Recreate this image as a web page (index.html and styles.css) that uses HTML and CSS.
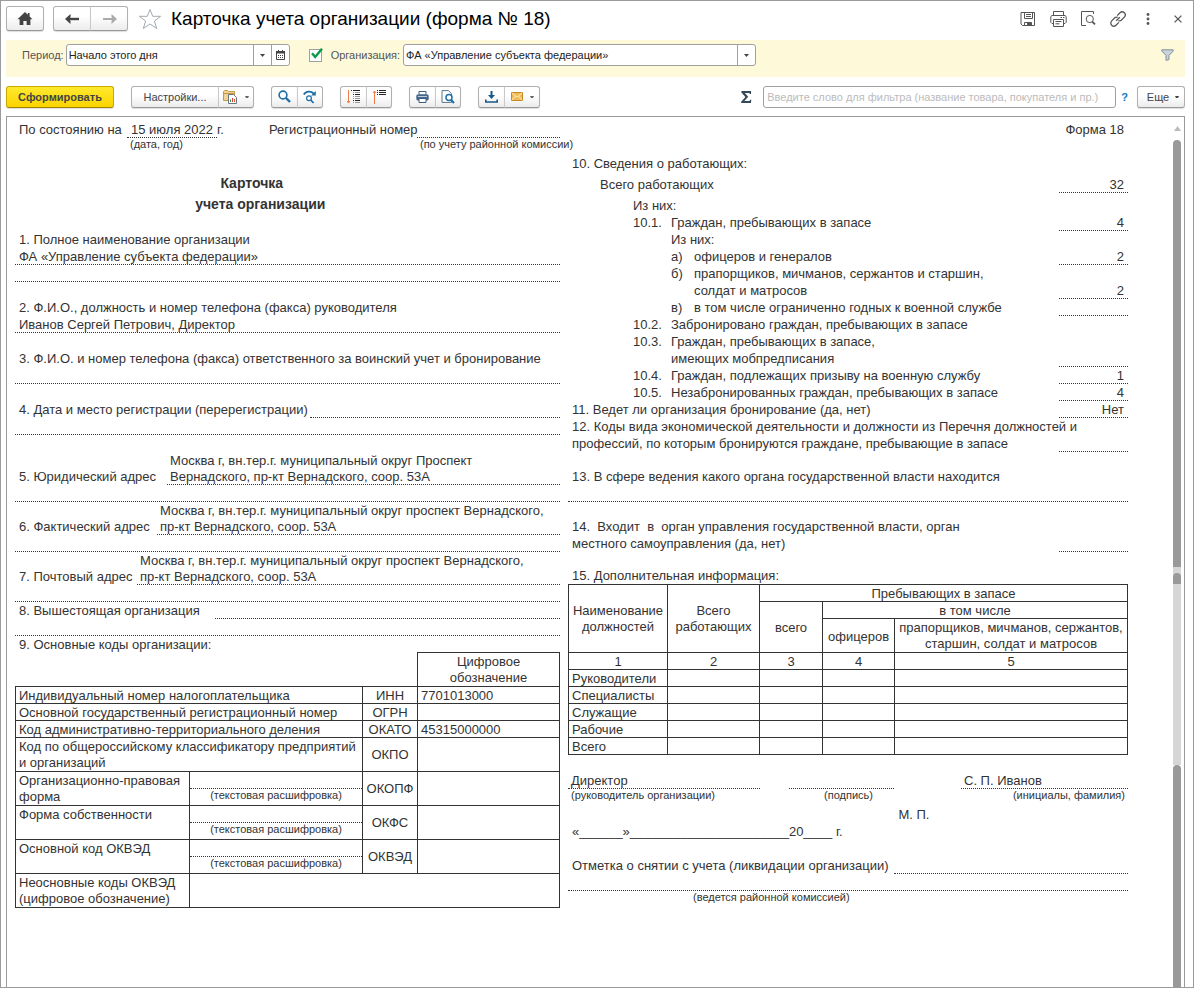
FILE: index.html
```html
<!DOCTYPE html>
<html lang="ru">
<head>
<meta charset="utf-8">
<title>Карточка учета организации (форма № 18)</title>
<link rel="stylesheet" href="styles.css">
</head>
<body>
<div class="window">
  <header class="titlebar">
    <button class="btn nav" aria-label="Домой"><svg width="16" height="14" viewBox="0 0 16 14"><path d="M8 0 0.5 7.2H2.6V13H6.4V9H9.6V13H13.4V7.2H15.5L12.6 4.4V1H10.8V2.7Z" fill="#444"/></svg></button>
    <div class="group">
      <button class="btn nav" aria-label="Назад"><svg width="15" height="12" viewBox="0 0 15 12"><path d="M2 6H14" stroke="#444" stroke-width="2.4"/><path d="M0 6 5.5 1V4L4.5 6 5.5 8V11Z" fill="#444"/></svg></button>
      <button class="btn nav" aria-label="Вперед"><svg width="15" height="12" viewBox="0 0 15 12"><path d="M13 6H1" stroke="#aaa" stroke-width="2"/><path d="M15 6 9.5 1V4L10.5 6 9.5 8V11Z" fill="#aaa"/></svg></button>
    </div>
    <button class="icon star" aria-label="В избранное"><svg width="24" height="22" viewBox="0 0 24 22"><path d="M12 1.5 14.7 8.3H22.6L16.4 13 18.7 20.5 12 16 5.3 20.5 7.6 13 1.4 8.3H9.3Z" fill="#fff" stroke="#a3a9b0"/></svg></button>
    <h1>Карточка учета организации (форма № 18)</h1>
    <div class="winicons">
      <button class="icon" aria-label="Сохранить"><svg width="16" height="16" viewBox="0 0 16 16" fill="none" stroke="#555"><path d="M1 1.5H14.5V14.5H2.5L1 13ZM4.5 1.5V7.5H12.5V1.5M6 3.5H11M6 5.5H11M4.5 14.5V11.5H11.5V14.5"/><path d="M7.5 12H11.5V14.5H7.5Z" fill="#555"/></svg></button>
      <button class="icon" aria-label="Печать"><svg width="17" height="16" viewBox="0 0 17 16" fill="none" stroke="#555"><path d="M3.5 4V.5H13.5V4M3.5 12.5H2L.8 11.3V5.5L2 4.5H15L16.2 5.5V11.3L15 12.5H13.5M3.5 8.5H13.5V15.5H3.5ZM5.5 10.5H11.5M5.5 12.8H9.5M10.5 6.5H12M13 6.5H14.5"/></svg></button>
      <button class="icon" aria-label="Просмотр"><svg width="16" height="16" viewBox="0 0 16 16" fill="none" stroke="#555"><path d="M6 14.5H1.5V.5H13.5V3"/><circle cx="9.8" cy="8" r="3.6"/><path d="M12.2 10.6 15 13.4" stroke-width="1.8"/></svg></button>
      <button class="icon" aria-label="Ссылка"><svg width="16" height="16" viewBox="0 0 16 16" fill="none" stroke="#555" stroke-width="1.3"><path d="M6.2 9.8 9.8 6.2M7.2 4.6 10 1.8A3 3 0 0 1 14.3 6.1L11.2 9.2A2.7 2.7 0 0 1 8.4 9.6M8.8 11.4 6 14.2A3 3 0 0 1 1.7 9.9L4.8 6.8A2.7 2.7 0 0 1 7.6 6.4"/></svg></button>
      <button class="icon" aria-label="Меню"><svg width="4" height="12" viewBox="0 0 4 12" fill="#555"><circle cx="2" cy="1.5" r="1.4"/><circle cx="2" cy="6" r="1.4"/><circle cx="2" cy="10.5" r="1.4"/></svg></button>
      <button class="icon" aria-label="Закрыть"><svg width="8" height="8" viewBox="0 0 8 8" stroke="#555" stroke-width="1.3"><path d="M.6.6 7.4 7.4M7.4.6.6 7.4"/></svg></button>
    </div>
  </header>

  <section class="filters">
    <label for="period">Период:</label>
    <div class="field period">
      <select id="period"><option>Начало этого дня</option></select>
      <span class="drop"><svg width="5" height="3" viewBox="0 0 5 3"><path d="M0 0H5L2.5 3Z" fill="#444"/></svg></span>
      <button class="cal" aria-label="Календарь"><svg width="9" height="10" viewBox="0 0 9 10"><path d="M.5 1.5H8.5V9.5H.5Z" fill="none" stroke="#444"/><path d="M0 1H9V3.4H0ZM2 0H3V1H2ZM6 0H7V1H6Z" fill="#444"/><path d="M2 5.5H7M2 7.5H7" stroke="#444" stroke-dasharray="1 1"/></svg></button>
    </div>
    <label class="check"><input type="checkbox" checked aria-label="Отбор по организации"><svg width="15" height="15" viewBox="0 0 15 15"><path d="M3 6.2 6.2 10 13 1.8" fill="none" stroke="#0a9a4a" stroke-width="2.4"/></svg></label>
    <label for="org">Организация:</label>
    <div class="field org">
      <select id="org"><option>ФА «Управление субъекта федерации»</option></select>
      <span class="drop"><svg width="5" height="3" viewBox="0 0 5 3"><path d="M0 0H5L2.5 3Z" fill="#444"/></svg></span>
    </div>
    <button class="icon funnel" aria-label="Отбор"><svg width="13" height="12" viewBox="0 0 13 12"><path d="M.8.8H12.2V2L8 6.4V10.6L5 11.4V6.4L.8 2Z" fill="#c9d3dc" stroke="#84919c"/></svg></button>
  </section>

  <div class="toolbar">
    <button class="btn primary">Сформировать</button>
    <div class="group">
      <button class="btn settings">Настройки...</button>
      <button class="btn wide" aria-label="Варианты"><svg width="15" height="14" viewBox="0 0 15 14"><path d="M.5 10.5V1.5L1.5.5H4.5L5.5 1.5H11.5V10.5Z" fill="#f3d394" stroke="#c39a49"/><path d="M1 3.5H11" stroke="#c39a49"/><path d="M5.5 4.5H10.5L13.5 7.5V13.5H5.5Z" fill="#fff" stroke="#68767f"/><path d="M7.5 12V9.5" stroke="#2f9b50"/><path d="M9.5 12V8" stroke="#e23c3c"/><path d="M11.5 12V9" stroke="#e25b3c"/></svg><svg width="4" height="2" viewBox="0 0 4 2"><path d="M0 0H4L3 2H1Z" fill="#666"/></svg></button>
    </div>
    <div class="group">
      <button class="btn sq" aria-label="Найти"><svg width="13" height="13" viewBox="0 0 13 13" fill="none" stroke="#1d6ea6"><circle cx="5" cy="5" r="3.9" stroke-width="1.6"/><path d="M8 8 12 12" stroke-width="2.4"/></svg></button>
      <button class="btn sq" aria-label="Искать дальше"><svg width="14" height="14" viewBox="0 0 14 14" fill="none" stroke="#1d6ea6"><path d="M.8 4.5C3 .8 8 .8 11 3.6" stroke-width="1.8"/><path d="M12.8 1V5.5H8Z" fill="#1d6ea6" stroke="none"/><circle cx="6" cy="8.3" r="2.4" stroke-width="1.2"/><path d="M7.8 10.2 10.6 13" stroke-width="1.7"/></svg></button>
    </div>
    <div class="group">
      <button class="btn sq" aria-label="Развернуть группы"><svg width="13" height="14" viewBox="0 0 13 14" fill="none"><path d="M1.5 0V13M0 11 1.5 13 3 11" stroke="#ee7b4a"/><path d="M4 .5H5M6 .5H13M6 4.5H7M8 4.5H13M6 10.5H7M8 10.5H13" stroke="#222"/><path d="M6 2.5H7M8 2.5H13M6 6.5H7M8 6.5H13M6 8.5H7M8 8.5H13M6 12.5H7M8 12.5H13" stroke="#999"/></svg></button>
      <button class="btn sq" aria-label="Свернуть группы"><svg width="13" height="14" viewBox="0 0 13 14" fill="none"><path d="M1.5 14V1M0 3 1.5 1 3 3" stroke="#ee7b4a"/><path d="M4 .5H5M6 .5H13M4 2.5H5M6 2.5H13M4 4.5H5M6 4.5H13" stroke="#222"/></svg></button>
    </div>
    <div class="group">
      <button class="btn sq" aria-label="Печать"><svg width="13" height="12" viewBox="0 0 13 12"><path d="M3 .5H10V4H3Z" fill="#fff" stroke="#3b5f80"/><rect x=".3" y="3.5" width="12.4" height="6" rx="1.4" fill="#46678a"/><path d="M2 5.5H11" stroke="#b9cde0"/><path d="M3 7.5H10V11.5H3Z" fill="#fff" stroke="#3b5f80"/></svg></button>
      <button class="btn sq" aria-label="Предварительный просмотр"><svg width="14" height="14" viewBox="0 0 14 14" fill="none"><path d="M1 .6H7.5L10.5 3.6V12.4H1Z" fill="#fff" stroke="#5b7485"/><circle cx="8" cy="7.6" r="3" fill="#fff" stroke="#1d6ea6" stroke-width="1.5"/><path d="M10.2 10 13 13" stroke="#1d6ea6" stroke-width="2"/></svg></button>
    </div>
    <div class="group">
      <button class="btn sq" aria-label="Сохранить как"><svg width="13" height="12" viewBox="0 0 13 12"><path d="M5.5 0H7.5V4H10L6.5 8 3 4H5.5Z" fill="#17588a"/><path d="M.8 8.5V11H12.2V8.5" fill="none" stroke="#17588a" stroke-width="1.6"/></svg></button>
      <button class="btn wide" aria-label="Отправить"><svg width="12" height="9" viewBox="0 0 12 9"><path d="M.5.5H11.5V8.5H.5Z" fill="#f0bb55" stroke="#c68a25"/><path d="M.8.8 6 5.2 11.2.8M.8 8.2 4.4 4.2M11.2 8.2 7.6 4.2" fill="none" stroke="#fff3d0" stroke-width=".9"/></svg><svg width="4" height="2" viewBox="0 0 4 2"><path d="M0 0H4L3 2H1Z" fill="#666"/></svg></button>
    </div>
    <button class="icon sigma" aria-label="Сумма"><svg width="11" height="12" viewBox="0 0 11 12"><path d="M.4 0H10V3H8.9L8.3 1.9H3.8L7.2 5.8 3.4 10H8.5L9.2 8.8H10.3L9.9 12H.2V10.8L4.4 6.1.4 1.4Z" fill="#34495a"/></svg></button>
    <input class="search" type="text" aria-label="Фильтр" placeholder="Введите слово для фильтра (название товара, покупателя и пр.)">
    <a class="help" href="#">?</a>
    <button class="btn more">Еще<svg width="4" height="2" viewBox="0 0 4 2"><path d="M0 0H4L3 2H1Z" fill="#444"/></svg></button>
  </div>

  <main class="doc">
    <div class="sheet">
      <section class="left">
        <div class="row top"><span>По состоянию на</span><span class="fill">15 июля 2022</span><span class="unit">г.</span><span>Регистрационный номер</span><span class="fill"></span></div>
        <div class="row top note"><span></span><span>(дата, год)</span><span></span><span></span><span>(по учету районной комиссии)</span></div>
        <div class="row"></div>
        <h2><span>Карточка</span>учета организации</h2>
        <div class="row short"></div>
        <div class="row">1. Полное наименование организации</div>
        <div class="row fill">ФА «Управление субъекта федерации»</div>
        <div class="row fill"></div>
        <div class="row"></div>
        <div class="row">2. Ф.И.О., должность и номер телефона (факса) руководителя</div>
        <div class="row fill">Иванов Сергей Петрович, Директор</div>
        <div class="row"></div>
        <div class="row">3. Ф.И.О. и номер телефона (факса) ответственного за воинский учет и бронирование</div>
        <div class="row fill"></div>
        <div class="row"></div>
        <div class="row pair"><span class="w-reg">4. Дата и место регистрации (перерегистрации)</span><span class="fill"></span></div>
        <div class="row fill"></div>
        <div class="row"></div>
        <div class="pair addr"><span class="w-legal">5. Юридический адрес</span><span class="fill">Москва г, вн.тер.г. муниципальный округ Проспект<br>Вернадского, пр-кт Вернадского, соор. 53А</span></div>
        <div class="row fill"></div>
        <div class="pair addr"><span class="w-actual">6. Фактический адрес</span><span class="fill">Москва г, вн.тер.г. муниципальный округ проспект Вернадского,<br>пр-кт Вернадского, соор. 53А</span></div>
        <div class="row fill"></div>
        <div class="pair addr"><span class="w-post">7. Почтовый адрес</span><span class="fill">Москва г, вн.тер.г. муниципальный округ проспект Вернадского,<br>пр-кт Вернадского, соор. 53А</span></div>
        <div class="row fill"></div>
        <div class="row pair"><span class="w-parent">8. Вышестоящая организация</span><span class="fill"></span></div>
        <div class="row fill"></div>
        <div class="row short">9. Основные коды организации:</div>
        <table class="codes">
          <colgroup><col class="c1"><col class="c2"><col class="c3"><col></colgroup>
          <tr class="r2"><td class="none" colspan="3"></td><th>Цифровое<br>обозначение</th></tr>
          <tr><td colspan="2">Индивидуальный номер налогоплательщика</td><td class="code">ИНН</td><td>7701013000</td></tr>
          <tr><td colspan="2">Основной государственный регистрационный номер</td><td class="code">ОГРН</td><td></td></tr>
          <tr><td colspan="2">Код административно-территориального деления</td><td class="code">ОКАТО</td><td>45315000000</td></tr>
          <tr class="r2"><td colspan="2">Код по общероссийскому классификатору предприятий<br>и организаций</td><td class="code">ОКПО</td><td></td></tr>
          <tr class="r2"><td>Организационно-правовая<br>форма</td><td class="decode"><div class="line"></div><small>(текстовая расшифровка)</small></td><td class="code">ОКОПФ</td><td></td></tr>
          <tr class="r2"><td>Форма собственности</td><td class="decode"><div class="line"></div><small>(текстовая расшифровка)</small></td><td class="code">ОКФС</td><td></td></tr>
          <tr class="r2"><td>Основной код ОКВЭД</td><td class="decode"><div class="line"></div><small>(текстовая расшифровка)</small></td><td class="code">ОКВЭД</td><td></td></tr>
          <tr class="r2"><td>Неосновные коды ОКВЭД<br>(цифровое обозначение)</td><td colspan="3"></td></tr>
        </table>
      </section>

      <section class="right">
        <div class="row form">Форма 18</div>
        <div class="row"></div>
        <div class="row">10. Сведения о работающих:</div>
        <div class="row tall item in1"><span>Всего работающих</span><span class="val fill">32</span></div>
        <div class="row tall item in2"><span>Из них:</span></div>
        <div class="row item in2"><b class="num">10.1.</b><span>Граждан, пребывающих в запасе</span><span class="val fill">4</span></div>
        <div class="row item in3"><span>Из них:</span></div>
        <div class="row item in3"><b class="let">а)</b><span>офицеров и генералов</span><span class="val fill">2</span></div>
        <div class="row item in3"><b class="let">б)</b><span>прапорщиков, мичманов, сержантов и старшин,</span></div>
        <div class="row item in3"><b class="let"></b><span>солдат и матросов</span><span class="val fill">2</span></div>
        <div class="row item in3"><b class="let">в)</b><span>в том числе ограниченно годных к военной службе</span><span class="val fill"></span></div>
        <div class="row item in2"><b class="num">10.2.</b><span>Забронировано граждан, пребывающих в запасе</span></div>
        <div class="row item in2"><b class="num">10.3.</b><span>Граждан, пребывающих в запасе,</span></div>
        <div class="row item in3"><span>имеющих мобпредписания</span><span class="val fill"></span></div>
        <div class="row item in2"><b class="num">10.4.</b><span>Граждан, подлежащих призыву на военную службу</span><span class="val fill">1</span></div>
        <div class="row item in2"><b class="num">10.5.</b><span>Незабронированных граждан, пребывающих в запасе</span><span class="val fill">4</span></div>
        <div class="row item"><span>11. Ведет ли организация бронирование (да, нет)</span><span class="val fill">Нет</span></div>
        <div class="row">12. Коды вида экономической деятельности и должности из Перечня должностей и</div>
        <div class="row item"><span>профессий, по которым бронируются граждане, пребывающие в запасе</span><span class="val fill"></span></div>
        <div class="row double">13. В сфере ведения какого органа государственной власти находится</div>
        <div class="row fill"></div>
        <div class="row double">14.&nbsp; Входит&nbsp; в&nbsp; орган управления государственной власти, орган</div>
        <div class="row item"><span>местного самоуправления (да, нет)</span><span class="val fill"></span></div>
        <div class="row double last">15. Дополнительная информация:</div>
        <table class="staff">
          <colgroup><col class="s1"><col class="s2"><col class="s3"><col class="s4"><col></colgroup>
          <tr><th class="two" rowspan="4">Наименование<br>должностей</th><th class="two" rowspan="4">Всего<br>работающих</th><th colspan="3">Пребывающих в запасе</th></tr>
          <tr><th rowspan="3">всего</th><th colspan="2">в том числе</th></tr>
          <tr><th rowspan="2">офицеров</th><th class="two" rowspan="2">прапорщиков, мичманов, сержантов,<br>старшин, солдат и матросов</th></tr>
          <tr></tr>
          <tr><th>1</th><th>2</th><th>3</th><th>4</th><th>5</th></tr>
          <tr><td>Руководители</td><td></td><td></td><td></td><td></td></tr>
          <tr><td>Специалисты</td><td></td><td></td><td></td><td></td></tr>
          <tr><td>Служащие</td><td></td><td></td><td></td><td></td></tr>
          <tr><td>Рабочие</td><td></td><td></td><td></td><td></td></tr>
          <tr><td>Всего</td><td></td><td></td><td></td><td></td></tr>
        </table>
        <div class="row"></div>
        <div class="row sign"><span class="fill">Директор</span><span class="fill"></span><span class="fill">С. П. Иванов</span></div>
        <div class="row sign note"><span>(руководитель организации)</span><span>(подпись)</span><span>(инициалы, фамилия)</span></div>
        <div class="row stamp">М. П.</div>
        <div class="row">«______»______________________20____ г.</div>
        <div class="row"></div>
        <div class="row pair"><span class="w-mark">Отметка о снятии с учета (ликвидации организации)</span><span class="fill"></span></div>
        <div class="row fill"></div>
        <div class="row note commission">(ведется районной комиссией)</div>
      </section>
    </div>
    <div class="scroll" aria-hidden="true">
      <svg width="7" height="5" viewBox="0 0 7 5"><path d="M3.5 0 7 5H0Z" fill="#bbb"/></svg>
      <div class="thumb upper"></div>
      <div class="track"><div class="thumb bit"></div></div>
      <div class="thumb lower"></div>
    </div>
  </main>
</div>
</body>
</html>
```
FILE: styles.css
```css
* { box-sizing: border-box; }
body {
  margin: 0;
  background: #fff;
  color: #333;
  font: 11px/16px "Liberation Sans", Arial, sans-serif;
}
button, input, select { font: inherit; color: inherit; margin: 0; }
svg { display: block; flex: none; }

.window {
  display: flex;
  flex-direction: column;
  min-height: 100vh;
  padding: 0 8px 0 5px;
  border: 1px solid #9b9b9b;
}

/* Title bar */
.titlebar { display: flex; align-items: center; height: 39px; padding-bottom: 4px; }
h1 { margin: 0; font-size: 19px; font-weight: 400; line-height: 24px; color: #000; white-space: nowrap; }
.icon {
  display: flex;
  align-items: center;
  justify-content: center;
  padding: 0;
  border: 0;
  background: none;
}
.star { margin: 0 9px 0 10px; }
.winicons { display: flex; margin-left: auto; margin-right: -8px; }
.winicons .icon { width: 30px; height: 30px; }

.btn {
  display: flex;
  align-items: center;
  justify-content: center;
  height: 22px;
  padding: 0;
  border: 1px solid #b0b0b0;
  border-bottom-color: #999;
  border-radius: 3px;
  background: linear-gradient(#fff 40%, #ececec);
  box-shadow: 0 1px 1px #ddd;
  color: #444;
  white-space: nowrap;
}
.nav { width: 38px; height: 25px; }
.titlebar > .nav { margin-right: 9px; }
.group { display: flex; flex: none; }
.group .btn + .btn { margin-left: -1px; border-left-color: #c8c8c8; border-radius: 0 3px 3px 0; }
.group .btn:first-child { border-radius: 3px 0 0 3px; }

/* Filter band */
.filters {
  display: flex;
  align-items: flex-start;
  height: 37px;
  padding: 4px 11px 0 16px;
  background: #fef9d9;
  color: #555;
  line-height: 22px;
}
.field { display: flex; height: 22px; border: 1px solid #a0a0a0; border-radius: 3px; background: #fff; overflow: hidden; }
.field select { flex: 1; min-width: 0; padding: 0 2px; border: 0; background: none; appearance: none; color: #222; line-height: 18px; outline: 0; }
.drop, .cal { display: flex; align-items: center; justify-content: center; width: 18px; padding: 0; border: 0; border-left: 1px solid #a0a0a0; background: none; }
.period { width: 224px; margin-left: 2px; }
.org { flex: 0 1 353px; margin-left: 3px; }
.check { position: relative; margin: 5px 9px 0 19px; width: 13px; height: 13px; }
.check input { display: block; width: 13px; height: 13px; appearance: none; border: 1px solid #a0a0a0; background: #fff; }
.check svg { position: absolute; left: 0; top: -2px; }
.funnel { margin-left: auto; height: 22px; }

/* Command bar */
.toolbar { display: flex; align-items: center; gap: 17px; height: 39px; }
.primary {
  width: 108px;
  flex: none;
  border-color: #c9a800;
  border-bottom-color: #a08600;
  background: linear-gradient(#ffe92e, #fbd400);
  font-weight: 700;
}
.settings { width: 88px; }
.sq { width: 27px; }
.sq + .sq { width: 26px; }
.wide { width: 36px; gap: 7px; }
.sigma { margin: 0 -6px 0 auto; }
.search {
  flex: 0 1 353px;
  min-width: 0;
  height: 22px;
  padding: 0 3px;
  border: 1px solid #a0a0a0;
  border-radius: 3px;
  background: #fff;
}
.search::placeholder { color: #bbb; }
.help { margin: 0 -8px 0 -12px; color: #0a7ac2; font-weight: 700; text-decoration: none; }
.more { width: 48px; flex: none; gap: 6px; padding-left: 4px; }

/* Report */
.doc {
  flex: 1;
  display: flex;
  border: 1px solid #9b9b9b;
  border-bottom: 0;
  color: #333;
  font-size: 13px;
}
.sheet {
  flex: 1;
  display: grid;
  grid-template-columns: 545fr 560fr;
  gap: 8px;
  align-items: start;
  padding: 4px 42px 40px 8px;
}
.left, .right { min-width: 0; }
.row { height: 17px; padding: 0 4px; line-height: 17px; white-space: nowrap; }
.short { height: 16px; }
.fill { border-bottom: 1px dotted #333; }
.note { font-size: 11px; line-height: 13px; }

.top { display: grid; grid-template-columns: 108px 90px 52px 148px 1fr; }
.top .fill { height: 17px; padding-left: 4px; }
.top .fill:last-child { margin-right: -4px; }
.top.note span { padding-left: 3px; }
h2 { width: 90%; margin: 0; padding-top: 1px; font-size: 14px; line-height: 21px; text-align: center; }
h2 span { display: block; padding-right: 17px; }

.pair { display: flex; align-items: flex-end; padding: 0; }
.pair > span { height: 17px; padding-left: 4px; flex: none; }
.pair > .fill { flex: 1; min-width: 0; padding-left: 3px; }
.addr { white-space: nowrap; line-height: 17px; }
.addr > .fill { height: 33px; padding-top: 1px; line-height: 16px; }
.w-reg { width: 295px; }
.w-legal { width: 152px; }
.w-actual { width: 142px; }
.w-post { width: 122px; }
.w-parent { width: 200px; }
.w-mark { width: 326px; }

table { width: 100%; border-collapse: collapse; table-layout: fixed; line-height: 15px; }
th, td { height: 17px; padding: 1px 3px 0; border: 1px solid #333; font-weight: 400; white-space: nowrap; vertical-align: top; text-align: left; }
th { padding: 1px 0 0; text-align: center; vertical-align: middle; }
tr { height: 17px; }
.r2, .two { line-height: 16px; }
.r2 td, .r2 th { height: 34px; }
.codes .none { border-top: 0; border-left: 0; }
.codes .code { padding: 1px 0 0; text-align: center; vertical-align: middle; }
.codes .decode { padding: 0; text-align: center; }
.line { height: 17px; border-bottom: 1px dotted #333; }
small { display: block; font-size: 11px; line-height: 13px; }
.c1 { width: 174px; }
.c2 { width: 173px; }
.c3 { width: 55px; }
.s1 { width: 99px; }
.s2 { width: 92px; }
.s3 { width: 63px; }
.s4 { width: 72px; }

.form { text-align: right; }
.tall { height: 21px; }
.double { display: flex; align-items: flex-end; height: 33px; }
.last { height: 32px; }
.item { display: flex; align-items: flex-end; padding-right: 0; }
.item b { flex: none; font-weight: 400; height: 17px; }
.item span { height: 17px; }
.item .val { width: 69px; flex: none; margin-left: auto; padding-right: 4px; text-align: right; }
.num { width: 38px; }
.let { width: 23px; }
.in1 { padding-left: 32px; }
.in2 { padding-left: 65px; }
.in3 { padding-left: 103px; }

.sign { display: grid; grid-template-columns: 192fr 105fr 205fr; column-gap: 29px; padding: 0; }
.sign span { padding-left: 3px; }
.sign .fill { height: 17px; }
.sign span:nth-child(2) { padding-left: 14px; text-align: center; }
.sign span:nth-child(3) { margin-left: 38px; padding-right: 3px; }
.sign.note span:nth-child(3) { text-align: right; }
.stamp { padding-left: 59%; }
.commission { padding-left: 125px; }

/* Scroll bar */
.scroll { display: flex; flex-direction: column; align-items: center; width: 14px; padding-top: 9px; }
.scroll svg { margin-bottom: 9px; }
.thumb { width: 8px; background: #999; border-radius: 4px 4px 0 0; }
.upper { flex: 427; }
.track { flex: 192; width: 8px; padding-top: 6px; background: #d6d6d6; }
.bit { height: 11px; }
.lower { flex: 222; }
```
